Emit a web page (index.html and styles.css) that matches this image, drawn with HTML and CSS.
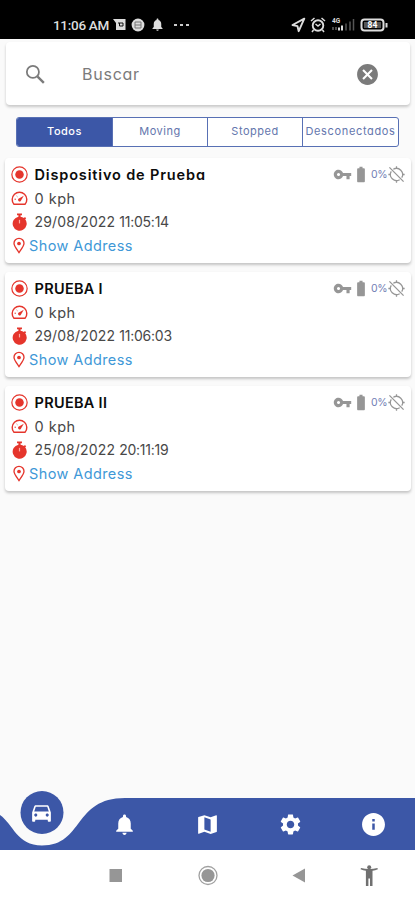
FILE: index.html
```html
<!DOCTYPE html>
<html lang="es">
<head>
<meta charset="utf-8">
<title>Dispositivos</title>
<link rel="stylesheet" href="styles.css">
</head>
<body>
<svg class="defs" width="0" height="0" aria-hidden="true">
  <symbol id="target" viewBox="0 0 24 24"><circle cx="12" cy="12" r="10.800" fill="none" stroke="currentColor" stroke-width="1.700"/><circle cx="12" cy="12" r="6" fill="currentColor"/></symbol>
  <symbol id="gauge" viewBox="0 0 24 24"><path d="M4.200 20.200h15.600a10.300 10.300 0 1 0-15.600 0z" fill="none" stroke="currentColor" stroke-width="2" stroke-linejoin="round"/><path d="M18 8l-4.200 7.400a2.200 2.200 0 1 1-3.300-3z" fill="currentColor"/><path d="M5 13h2M8 8.500l1 1" stroke="currentColor" stroke-width="1.400"/></symbol>
  <symbol id="watch" viewBox="0 0 24 24"><path d="M8.500 0h7v2.500h-2v2a9.700 9.700 0 0 1 4.800 2l1.400-1.400 1.700 1.700-1.300 1.400A9.900 9.900 0 1 1 10.500 4.500v-2h-2z" fill="currentColor"/><path d="M12 9v5" stroke="#ffaaa2" stroke-width="1.700"/></symbol>
  <symbol id="pin" viewBox="0 0 24 24"><path d="M12 22.500C8 17 4.500 13 4.500 8.800a7.500 7.500 0 0 1 15 0C19.500 13 16 17 12 22.500z" fill="none" stroke="currentColor" stroke-width="2"/><circle cx="12" cy="9" r="2.800" fill="currentColor"/></symbol>
  <symbol id="key" viewBox="0 0 24 24"><path fill="currentColor" d="M12.650 10C11.830 7.670 9.610 6 7 6c-3.310 0-6 2.690-6 6s2.690 6 6 6c2.610 0 4.830-1.670 5.650-4H17v4h4v-4h2v-4H12.650zM7 14c-1.100 0-2-.9-2-2s.9-2 2-2 2 .9 2 2-.9 2-2 2z"/></symbol>
  <symbol id="battery" viewBox="6 1 12 22"><path fill="currentColor" d="M15.670 4H14V2h-4v2H8.330C7.600 4 7 4.600 7 5.330v15.330C7 21.400 7.600 22 8.330 22h7.330c.74 0 1.340-.6 1.340-1.330V5.330C17 4.600 16.400 4 15.670 4z"/></symbol>
  <symbol id="gpsoff" viewBox="0 0 24 24"><path fill="none" stroke="currentColor" stroke-width="1.800" d="M7.500 4.600A8.700 8.700 0 0 1 19.400 16.500M16.500 19.400A8.700 8.700 0 0 1 4.600 7.500M2 2l20 20M12 .5v3M12 20.500v3M.5 12h3M20.500 12h3"/></symbol>
  <symbol id="bell" viewBox="0 0 24 24"><path fill="currentColor" d="M12 22c1.100 0 2-.9 2-2h-4c0 1.100.89 2 2 2zm6-6v-5c0-3.070-1.640-5.640-4.500-6.320V4c0-.83-.67-1.500-1.500-1.500s-1.500.67-1.500 1.500v.68C7.630 5.360 6 7.920 6 11v5l-2 2v1h16v-1l-2-2z"/></symbol>
</svg>
<div class="screen">
  <header class="status">
    <span class="time">11:06 AM</span>
    <svg class="s-chat" width="13" height="12" viewBox="0 0 13 12"><path d="M0 0h12.500v11H3V4z" fill="#ddd"/><path d="M5 4h5v3H6.500V4" stroke="#111" stroke-width="1" fill="none"/></svg>
    <svg class="s-round" width="14" height="14" viewBox="0 0 14 14"><circle cx="7" cy="7" r="6.400" fill="#ddd"/><path d="M4 4h6M4 7h6M4 10h6M4 4v6M10 4v6" stroke="#777" stroke-width="1"/></svg>
    <svg class="s-bell" width="15" height="15"><use href="#bell"/></svg>
    <span class="dots"><i></i><i></i><i></i></span>
    <svg class="s-right" width="98" height="18" viewBox="0 0 98 18" fill="none" stroke="#ddd">
      <path d="M13.300 2.700L1.500 9l5 1.200 1.200 5z" stroke-width="1.900" stroke-linejoin="round"/>
      <circle cx="27" cy="9.500" r="5.300" stroke-width="1.900"/><path d="M20 5l3.500-3M34 5l-3.500-3M22.500 14L21 16M31.500 14l1.500 2M24.500 8l2.500 2 2.500-2" stroke-width="1.500"/>
      <text x="41" y="7" class="net">4G</text>
      <path d="M42 11v3M45 11v3" stroke="#666" stroke-width="1.500"/><path d="M48 11.500v3M51 9.500v5" stroke-width="2"/><path d="M55 7.500v7M59 5.500v9M62.500 3v11.500" stroke="#555" stroke-width="1.500"/>
      <rect x="70.500" y="3.500" width="22" height="11" rx="3" stroke-width="2"/><path d="M95.500 7v4.500" stroke-width="2"/><rect x="73" y="6" width="17" height="6" fill="#555" stroke="none"/><text x="76.500" y="12" class="level">84</text>
    </svg>
  </header>
  <main>
    <div class="search">
      <svg class="lens" width="25" height="25" viewBox="0 0 24 24"><circle cx="9.500" cy="9.500" r="5.800" fill="none" stroke="currentColor" stroke-width="1.700"/><path d="M14 14l6 6" stroke="currentColor" stroke-width="2.300"/></svg>
      <span class="placeholder">Buscar</span>
      <svg class="clear" width="25" height="25" viewBox="0 0 24 24"><path fill="currentColor" d="M12 2C6.470 2 2 6.470 2 12s4.470 10 10 10 10-4.470 10-10S17.530 2 12 2zm5 13.590L15.590 17 12 13.410 8.410 17 7 15.590 10.590 12 7 8.410 8.410 7 12 10.590 15.590 7 17 8.410 13.410 12 17 15.590z"/></svg>
    </div>
    <div class="tabs"><span class="on">Todos</span><span>Moving</span><span>Stopped</span><span class="long">Desconectados</span></div>

    <article class="card">
      <div class="row title"><svg><use href="#target"/></svg><b class="name-long">Dispositivo de Prueba</b><div class="state"><svg class="key"><use href="#key"/></svg><svg class="batt"><use href="#battery"/></svg><em>0%</em><svg class="gps"><use href="#gpsoff"/></svg></div></div>
      <div class="row speed"><svg><use href="#gauge"/></svg><span>0 kph</span></div>
      <div class="row date"><svg><use href="#watch"/></svg><span>29/08/2022 <span class="hour">11:05:14</span></span></div>
      <div class="row address"><svg><use href="#pin"/></svg><span>Show Address</span></div>
    </article>
    <article class="card">
      <div class="row title"><svg><use href="#target"/></svg><b>PRUEBA I</b><div class="state"><svg class="key"><use href="#key"/></svg><svg class="batt"><use href="#battery"/></svg><em>0%</em><svg class="gps"><use href="#gpsoff"/></svg></div></div>
      <div class="row speed"><svg><use href="#gauge"/></svg><span>0 kph</span></div>
      <div class="row date"><svg><use href="#watch"/></svg><span>29/08/2022 <span class="hour">11:06:03</span></span></div>
      <div class="row address"><svg><use href="#pin"/></svg><span>Show Address</span></div>
    </article>
    <article class="card">
      <div class="row title"><svg><use href="#target"/></svg><b>PRUEBA II</b><div class="state"><svg class="key"><use href="#key"/></svg><svg class="batt"><use href="#battery"/></svg><em>0%</em><svg class="gps"><use href="#gpsoff"/></svg></div></div>
      <div class="row speed"><svg><use href="#gauge"/></svg><span>0 kph</span></div>
      <div class="row date"><svg><use href="#watch"/></svg><span>25/08/2022 <span class="hour">20:11:19</span></span></div>
      <div class="row address"><svg><use href="#pin"/></svg><span>Show Address</span></div>
    </article>
  </main>
  <nav class="nav">
    <svg class="wave" width="415" height="62" viewBox="0 0 415 62"><path fill="#3c57a7" d="M0 27C13 36 17 57.500 42 57.500C84 57.500 73 10 125 10H415V62H0z"/><circle cx="42" cy="24.500" r="21.500" fill="#3c57a7"/></svg>
    <div class="items">
      <svg class="car" viewBox="0 0 24 24"><path fill="currentColor" fill-rule="evenodd" d="M18.920 5.010C18.720 4.420 18.160 4 17.500 4h-11c-.66 0-1.210.42-1.420 1.010L3 11v8c0 .55.45 1 1 1h1c.55 0 1-.45 1-1v-1h12v1c0 .55.45 1 1 1h1c.55 0 1-.45 1-1v-8l-2.080-5.990zM6.500 15c-.83 0-1.500-.67-1.500-1.500S5.670 12 6.500 12s1.500.67 1.500 1.500S7.330 15 6.500 15zm11 0c-.83 0-1.500-.67-1.500-1.500s.67-1.500 1.500-1.500 1.500.67 1.500 1.500-.67 1.500-1.500 1.500zM5 10l1.500-4.500h11L19 10H5z"/></svg>
      <svg><use href="#bell"/></svg>
      <svg viewBox="0 0 24 24"><path fill="currentColor" d="M20.500 3l-.16.03L15 5.100 9 3 3.360 4.900c-.21.070-.36.250-.36.480V20.500c0 .28.220.5.5.5l.16-.03L9 18.900l6 2.100 5.640-1.900c.21-.070.360-.25.360-.48V3.500c0-.28-.22-.5-.5-.5zM15 19l-6-2.110V5l6 2.110V19z"/></svg>
      <svg viewBox="0 0 24 24"><path fill="currentColor" d="M19.140 12.940c.04-.3.060-.61.060-.94 0-.32-.02-.64-.07-.94l2.030-1.580c.18-.14.230-.41.120-.61l-1.920-3.320c-.12-.22-.37-.29-.59-.22l-2.390.96c-.5-.38-1.030-.7-1.620-.94l-.36-2.540c-.04-.24-.24-.41-.48-.41h-3.840c-.24 0-.43.17-.47.41l-.36 2.540c-.59.24-1.130.57-1.620.94l-2.390-.96c-.22-.08-.47 0-.59.22L2.740 8.870c-.12.21-.08.47.12.61l2.030 1.580c-.05.3-.09.63-.09.94s.02.64.07.94l-2.030 1.580c-.18.14-.23.41-.12.61l1.920 3.320c.12.22.37.29.59.22l2.390-.96c.5.38 1.030.7 1.620.94l.36 2.540c.05.24.24.41.48.41h3.840c.24 0 .44-.17.47-.41l.36-2.540c.59-.24 1.130-.56 1.620-.94l2.390.96c.22.08.47 0 .59-.22l1.920-3.320c.12-.22.07-.47-.12-.61l-2.010-1.580zM12 15.600c-1.980 0-3.600-1.620-3.600-3.600s1.620-3.600 3.600-3.600 3.600 1.620 3.600 3.600-1.620 3.600-3.600 3.600z"/></svg>
      <svg class="info" viewBox="0 0 24 24"><path fill="currentColor" d="M12 1C5.930 1 1 5.930 1 12s4.930 11 11 11 11-4.930 11-11S18.070 1 12 1zm1.200 16h-2.400v-6h2.400v6zm0-8h-2.400V6.600h2.400V9z"/></svg>
    </div>
  </nav>
  <footer class="system">
    <svg width="415" height="50" viewBox="0 0 415 50" fill="#969696"><rect x="109.500" y="19" width="12.500" height="13"/><circle cx="208" cy="25.500" r="9" fill="none" stroke="#a0a0a0" stroke-width="1.300"/><circle cx="208" cy="25.500" r="6.600"/><path d="M292.500 25.500L305 18.500v14z"/><g fill="#707070"><circle cx="369.200" cy="17.200" r="2"/><path d="M360.500 19.200l.5-1.300c5 1.500 11.400 1.500 16.400 0l.5 1.300c-1.800.8-3.600 1.300-5.400 1.600V36H370v-7.500h-1.600V36h-2.500V20.800c-1.800-.3-3.600-.8-5.400-1.600z"/></g></svg>
  </footer>
</div>
</body>
</html>
```

FILE: styles.css
```css
* { box-sizing: border-box; }
body { margin: 0; background: #fafafa; font-family: Inter, "Liberation Sans", sans-serif; font-feature-settings: "cv11"; }
svg { display: block; flex: none; }
.defs { position: absolute; }
.screen { width: 415px; height: 900px; display: flex; flex-direction: column; overflow: hidden; }
.status { height: 39px; background: #000; color: #ddd; display: flex; align-items: center; padding: 10px 0 0 53px; }
.time { width: 60px; font: 500 13.500px Roboto, sans-serif; letter-spacing: -.3px; white-space: nowrap; }
.s-round { margin-left: 5px; }
.s-bell { margin-left: 5px; }
.dots { display: flex; gap: 3px; margin-left: 9px; }
.dots i { width: 3px; height: 2px; background: #ccc; }
.s-right { margin-left: auto; margin-right: 26px; }
.net { font: 700 6.500px Roboto, sans-serif; fill: #ddd; stroke: none; }
.level { font: 700 8.500px Roboto, sans-serif; fill: #fff; stroke: none; }
main { flex: 1; padding: 3px 4px 0 5px; }
.search { height: 63px; margin: 0 1px; background: #fff; border-radius: 4px; box-shadow: 0 2px 3px rgba(0,0,0,.2); display: flex; align-items: center; padding: 2px 30px 0 17px; color: #7b7b7b; }
.placeholder { margin-left: 34px; font-size: 16px; letter-spacing: .75px; padding-bottom: 1px; }
.clear { margin-left: auto; }
.tabs { margin: 12px 0 11px 11px; height: 30px; display: grid; grid-template-columns: 95px 95px 95px 96px; border: 1px solid #5870b4; border-radius: 3px; background: #fff; overflow: hidden; width: 383px; }
.tabs span { display: flex; align-items: center; justify-content: center; padding-bottom: 2px; font-size: 11px; letter-spacing: .5px; color: #6476ad; border-left: 1px solid #5870b4; white-space: nowrap; }
.tabs .on { background: #3c57a7; color: #fff; border: 0; font-weight: 500; }
.tabs .long { letter-spacing: .65px; }
.card { height: 105px; margin-bottom: 9px; background: #fff; border-radius: 4px; box-shadow: 0 2px 3px rgba(0,0,0,.22); padding: 4px 6px 0; }
.row { height: 23px; display: flex; align-items: center; white-space: nowrap; color: #484848; font-size: 14px; }
.row > svg { width: 17px; height: 17px; color: #e5352c; }
.row > span, .row > b { margin-left: 6.500px; }
.title { height: 25px; }
.title b { color: #0c0c0c; font-weight: 600; font-size: 14.500px; letter-spacing: .3px; }
.title .name-long { letter-spacing: .85px; }
.speed { font-size: 14.500px; letter-spacing: .5px; }
.date { font-size: 14px; letter-spacing: .15px; }
.date svg { height: 18px; }
.date .hour { letter-spacing: -.25px; }
.address { height: 24px; }
.address > svg { width: 16px; }
.address > span { margin-left: 2px; color: #4098d7; font-size: 14.500px; letter-spacing: .4px; }
.state { margin-left: auto; display: flex; align-items: center; color: #969696; }
.state .key { width: 19px; height: 19px; }
.state .batt { width: 10px; height: 17px; margin-left: 4px; }
.state em { font-style: normal; font-size: 10.500px; color: #7380b5; width: 16px; margin: 0 1px 1px 5px; letter-spacing: -.4px; }
.state .gps { width: 17px; height: 17px; }
.nav { height: 62px; position: relative; }
.wave { position: absolute; left: 0; top: 0; }
.items { position: relative; display: grid; grid-template-columns: repeat(5, 83px); justify-items: center; align-items: center; height: 62px; padding-top: 11px; color: #fff; }
.items svg { width: 25px; height: 25px; }
.items .car { transform: translateY(-11px); }
.system { height: 50px; background: #fff; }
```
